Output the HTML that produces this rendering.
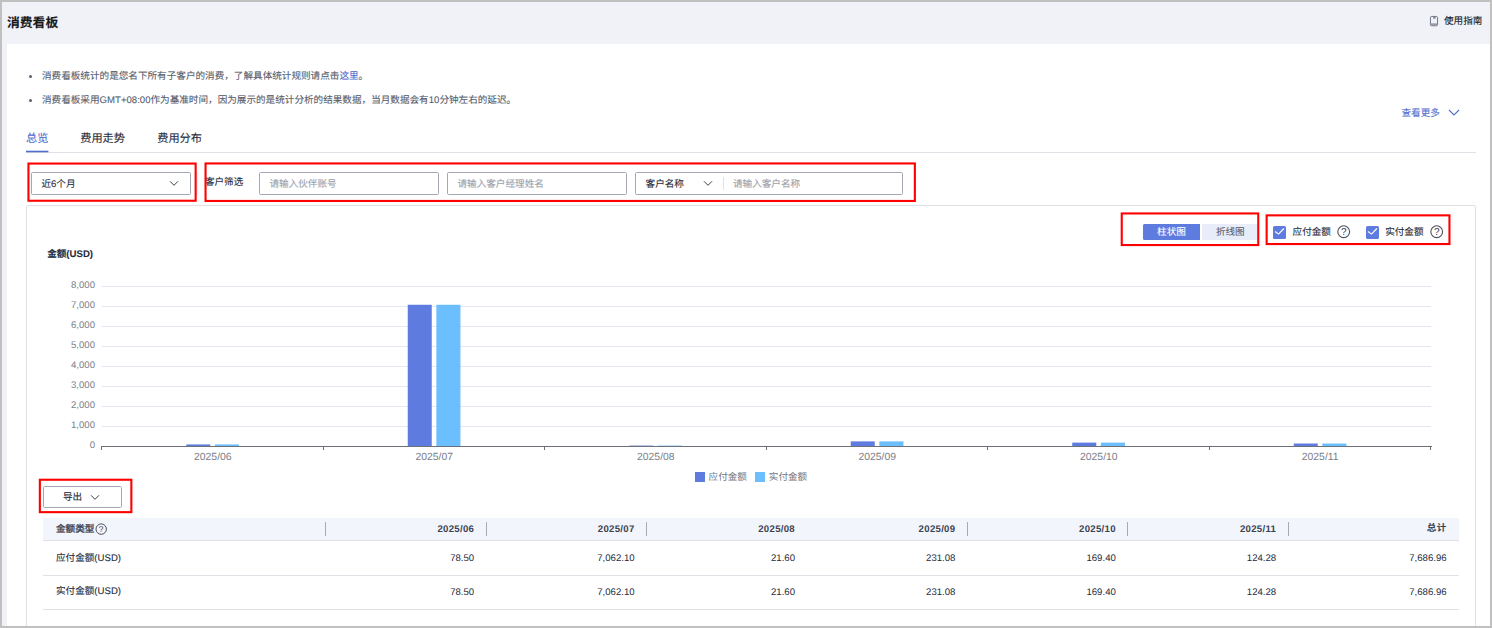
<!DOCTYPE html>
<html lang="zh-CN">
<head>
<meta charset="utf-8">
<title>消费看板</title>
<style>
*{box-sizing:border-box;margin:0;padding:0}
html,body{width:1492px;height:628px;overflow:hidden;background:#f0f2f7}
body{position:relative;font-family:"Liberation Sans","Noto Sans CJK SC",sans-serif;font-size:9.6px;color:#252b3a;line-height:1;text-rendering:geometricPrecision;-webkit-font-smoothing:antialiased}
.abs{position:absolute}
.t{position:absolute;white-space:nowrap;line-height:12px;height:12px;-webkit-text-stroke:.1px}
#frame{position:absolute;left:0;top:0;width:1492px;height:628px;border:2px solid #c0c0c0;z-index:50;pointer-events:none}
#card{position:absolute;left:7px;top:44px;width:1483px;height:582px;background:#fff}
.red{position:absolute;border:2px solid #ff0000}
.inp{position:absolute;height:22.6px;top:172.1px;border:1px solid #a4a8b4;border-radius:1.6px;background:#fff}
.ph{color:#9da1ab}
.blue{color:#526ecc}
.grid{position:absolute;left:102px;width:1329px;height:1px;background:#e3e6f3}
.yl{position:absolute;width:60px;left:35px;text-align:right;color:#7a7e88;line-height:12px;height:12px;font-size:9.6px}
.xl{position:absolute;width:80px;text-align:center;color:#7a7e88;line-height:12px;height:12px;font-size:10.4px;top:452.2px}
.b1{position:absolute;background:#5e7ce0}
.b2{position:absolute;background:#6cbfff}
.tick{position:absolute;width:1px;height:4px;top:446px;background:#6e7079}
.th{position:absolute;top:519px;height:22.4px;line-height:22px;font-weight:bold;color:#3d4351;text-align:right;padding-right:12px;font-size:9.6px;letter-spacing:.3px}
.td{position:absolute;height:34px;line-height:34px;text-align:right;padding-right:12px;color:#252b3a}
.sep{position:absolute;top:522px;height:13.5px;width:1px;background:#a6aab3}
.hl{position:absolute;left:43px;width:1416px;height:1px;background:#dfe1e6}
</style>
</head>
<body>
<div id="frame"></div>
<!-- header -->
<div class="t" style="left:7px;top:14.8px;font-size:12.8px;font-weight:bold;line-height:16px;height:16px;color:#191919">消费看板</div>
<svg class="abs" style="left:1429px;top:15px" width="10" height="12" viewBox="0 0 10 12"><rect x="1.45" y="1.45" width="7.1" height="9.3" rx="1.3" fill="none" stroke="#6b7080" stroke-width=".95"/><path d="M1.6 8.6H8.4" stroke="#9a9eaa" stroke-width=".8" fill="none"/><path d="M1.6 9.7H8.4" stroke="#7a7f8c" stroke-width=".9" fill="none"/><path d="M4.3 1.5V4L5.4 3.4L6.5 4V1.5Z" fill="#7a7f8c"/></svg>
<div class="t" style="left:1444px;top:15.8px;color:#191919">使用指南</div>

<div id="card"></div>

<!-- notes -->
<div class="abs" style="left:28.6px;top:74.6px;width:3px;height:3px;border-radius:50%;background:#575d6c"></div>
<div class="t" style="left:42px;top:70.8px;color:#575d6c">消费看板统计的是您名下所有子客户的消费，了解具体统计规则请点击<span class="blue">这里</span>。</div>
<div class="abs" style="left:28.6px;top:98.6px;width:3px;height:3px;border-radius:50%;background:#575d6c"></div>
<div class="t" style="left:42px;top:94.8px;color:#575d6c">消费看板采用GMT+08:00作为基准时间，因为展示的是统计分析的结果数据，当月数据会有10分钟左右的延迟。</div>
<div class="t blue" style="left:1401.5px;top:108.1px">查看更多</div>
<svg class="abs" style="left:1447.6px;top:109.3px" width="12" height="8" viewBox="0 0 12 8"><path d="M1 1L6 6L11 1" fill="none" stroke="#526ecc" stroke-width="1.1"/></svg>

<!-- tabs -->
<div class="abs" style="left:26px;top:152px;width:1450px;height:1px;background:#dfe1e6"></div>
<svg class="abs" style="left:26px;top:149px" width="24" height="5"><rect x="0" y="1.7" width="22.4" height="1.6" fill="#526ecc"/></svg>
<div class="t blue" style="left:26px;top:131.8px;font-size:11.2px;line-height:14px;height:14px">总览</div>
<div class="t" style="left:80.2px;top:131.8px;font-size:11.2px;line-height:14px;height:14px">费用走势</div>
<div class="t" style="left:157.2px;top:131.8px;font-size:11.2px;line-height:14px;height:14px">费用分布</div>

<!-- filters -->
<div class="inp" style="left:31px;width:160px"></div>
<div class="t" style="left:41.4px;top:179.4px">近6个月</div>
<svg class="abs" style="left:169px;top:180.4px" width="10" height="7" viewBox="0 0 10 7"><path d="M1 1.3L5 5.3L9 1.3" fill="none" stroke="#3a3f4c" stroke-width="1"/></svg>
<svg class="abs" style="left:25px;top:160px" width="175" height="45"><rect x="3.45" y="3.55" width="167.20" height="37.20" fill="none" stroke="#ff0000" stroke-width="2.1"/></svg>
<div class="abs" style="left:197px;top:172px;width:1px;height:22.6px;background:#e9ecf3"></div>
<div class="t" style="left:204.9px;top:176.6px">客户筛选</div>
<div class="inp" style="left:259px;width:180px"></div>
<div class="t ph" style="left:269.5px;top:179.4px">请输入伙伴账号</div>
<div class="inp" style="left:447px;width:180px"></div>
<div class="t ph" style="left:457.5px;top:179.4px">请输入客户经理姓名</div>
<div class="inp" style="left:635px;width:268px"></div>
<div class="t" style="left:645.6px;top:179.4px">客户名称</div>
<svg class="abs" style="left:702.6px;top:180.4px" width="10" height="7" viewBox="0 0 10 7"><path d="M1 1.3L5 5.3L9 1.3" fill="none" stroke="#3a3f4c" stroke-width="1"/></svg>
<div class="abs" style="left:723px;top:177.4px;width:1px;height:12.4px;background:#dfe1e6"></div>
<div class="t ph" style="left:733px;top:179.4px">请输入客户名称</div>
<svg class="abs" style="left:202px;top:160px" width="717" height="45"><rect x="3.55" y="3.45" width="709.30" height="37.50" fill="none" stroke="#ff0000" stroke-width="2.1"/></svg>

<!-- chart panel -->
<div class="abs" style="left:26px;top:205px;width:1450px;height:440px;border:1px solid #dfe1e6;border-radius:2px"></div>
<div class="abs" style="left:1143px;top:224px;width:57px;height:15.8px;background:#5e7ce0;border-radius:1.6px 0 0 1.6px"></div>
<div class="t" style="left:1143px;top:226.6px;width:57px;text-align:center;color:#fff">柱状图</div>
<div class="abs" style="left:1201.8px;top:224px;width:56px;height:15.8px;background:#e9edfa;border-radius:0 1.6px 1.6px 0"></div>
<div class="t" style="left:1201.8px;top:226.6px;width:57px;text-align:center;color:#575d6c">折线图</div>
<svg class="abs" style="left:1118px;top:210px" width="144" height="39"><rect x="3.75" y="3.45" width="136.50" height="31.60" fill="none" stroke="#ff0000" stroke-width="2.1"/></svg>
<svg class="abs" style="left:1273px;top:226px" width="13" height="13" viewBox="0 0 13 13"><rect width="13" height="13" rx="1.6" fill="#5e7ce0"/><path d="M2 5.5L5.5 8.1L10.9 2.5" fill="none" stroke="#fff" stroke-width="1.15"/></svg>
<div class="t" style="left:1292.6px;top:227.2px">应付金额</div>
<svg class="abs" style="left:1336.8px;top:224.8px" width="14" height="14" viewBox="0 0 14 14"><circle cx="6.7" cy="6.7" r="5.9" fill="none" stroke="#4a4f5c" stroke-width="1.1"/><text x="6.7" y="10.2" font-size="10" text-anchor="middle" fill="#3d4351" font-family="Liberation Sans,sans-serif">?</text></svg>
<svg class="abs" style="left:1366.2px;top:226px" width="13" height="13" viewBox="0 0 13 13"><rect width="13" height="13" rx="1.6" fill="#5e7ce0"/><path d="M2 5.5L5.5 8.1L10.9 2.5" fill="none" stroke="#fff" stroke-width="1.15"/></svg>
<div class="t" style="left:1385.2px;top:227.2px">实付金额</div>
<svg class="abs" style="left:1429.8px;top:224.8px" width="14" height="14" viewBox="0 0 14 14"><circle cx="6.7" cy="6.7" r="5.9" fill="none" stroke="#4a4f5c" stroke-width="1.1"/><text x="6.7" y="10.2" font-size="10" text-anchor="middle" fill="#3d4351" font-family="Liberation Sans,sans-serif">?</text></svg>
<svg class="abs" style="left:1263px;top:212px" width="191" height="37"><rect x="3.65" y="3.35" width="182.80" height="28.70" fill="none" stroke="#ff0000" stroke-width="2.1"/></svg>
<div class="t" style="left:47.2px;top:249.0px;font-weight:bold">金额(USD)</div>
<!-- chart -->
<div class="grid" style="top:285.8px"></div>
<div class="yl" style="top:280.2px">8,000</div>
<div class="grid" style="top:305.8px"></div>
<div class="yl" style="top:300.2px">7,000</div>
<div class="grid" style="top:325.8px"></div>
<div class="yl" style="top:320.2px">6,000</div>
<div class="grid" style="top:345.8px"></div>
<div class="yl" style="top:340.2px">5,000</div>
<div class="grid" style="top:365.8px"></div>
<div class="yl" style="top:360.2px">4,000</div>
<div class="grid" style="top:385.8px"></div>
<div class="yl" style="top:380.2px">3,000</div>
<div class="grid" style="top:405.8px"></div>
<div class="yl" style="top:400.2px">2,000</div>
<div class="grid" style="top:425.8px"></div>
<div class="yl" style="top:420.2px">1,000</div>
<div class="yl" style="top:440.2px">0</div>
<svg class="abs" style="left:0;top:0" width="1492" height="470" viewBox="0 0 1492 470"><rect x="186.25" y="444.43" width="24" height="1.57" fill="#5e7ce0"/><rect x="214.85" y="444.43" width="24.1" height="1.57" fill="#6cbfff"/><rect x="407.75" y="304.76" width="24" height="141.24" fill="#5e7ce0"/><rect x="436.35" y="304.76" width="24.1" height="141.24" fill="#6cbfff"/><rect x="629.25" y="445.57" width="24" height="0.43" fill="#5e7ce0"/><rect x="657.85" y="445.57" width="24.1" height="0.43" fill="#6cbfff"/><rect x="850.75" y="441.38" width="24" height="4.62" fill="#5e7ce0"/><rect x="879.35" y="441.38" width="24.1" height="4.62" fill="#6cbfff"/><rect x="1072.25" y="442.61" width="24" height="3.39" fill="#5e7ce0"/><rect x="1100.85" y="442.61" width="24.1" height="3.39" fill="#6cbfff"/><rect x="1293.75" y="443.51" width="24" height="2.49" fill="#5e7ce0"/><rect x="1322.35" y="443.51" width="24.1" height="2.49" fill="#6cbfff"/></svg>
<div class="abs" style="left:101px;top:445.8px;width:1331px;height:1px;background:#6e7079"></div>
<div class="tick" style="left:101.0px"></div>
<div class="tick" style="left:322.5px"></div>
<div class="tick" style="left:544.0px"></div>
<div class="tick" style="left:765.5px"></div>
<div class="tick" style="left:987.0px"></div>
<div class="tick" style="left:1208.5px"></div>
<div class="tick" style="left:1430.0px"></div>
<div class="xl" style="left:172.8px">2025/06</div>
<div class="xl" style="left:394.2px">2025/07</div>
<div class="xl" style="left:615.8px">2025/08</div>
<div class="xl" style="left:837.2px">2025/09</div>
<div class="xl" style="left:1058.8px">2025/10</div>
<div class="xl" style="left:1280.2px">2025/11</div>
<div class="abs" style="left:695px;top:472.3px;width:9.6px;height:9.6px;background:#5e7ce0"></div>
<div class="t" style="left:708.6px;top:472.2px;color:#71757f;-webkit-text-stroke:0">应付金额</div>
<div class="abs" style="left:755.2px;top:472.3px;width:9.6px;height:9.6px;background:#6cbfff"></div>
<div class="t" style="left:768.8px;top:472.2px;color:#71757f;-webkit-text-stroke:0">实付金额</div>
<!-- export -->
<div class="abs" style="left:43.2px;top:486.4px;width:78.4px;height:21.2px;border:1px solid #a4a8b4;border-radius:1.6px;background:#fff"></div>
<div class="t" style="left:63px;top:492.4px">导出</div>
<svg class="abs" style="left:90.4px;top:494.4px" width="10" height="7" viewBox="0 0 10 7"><path d="M1 1.3L5 5.3L9 1.3" fill="none" stroke="#3a3f4c" stroke-width="1"/></svg>
<svg class="abs" style="left:36px;top:476px" width="99" height="40"><rect x="3.85" y="3.75" width="91.50" height="32.40" fill="none" stroke="#ff0000" stroke-width="2.1"/></svg>
<!-- table -->
<div class="abs" style="left:43px;top:518px;width:1416px;height:22.4px;background:#f2f5fc"></div>
<div class="hl" style="top:540px"></div>
<div class="hl" style="top:574.8px"></div>
<div class="hl" style="top:608.8px"></div>
<div class="t" style="left:56px;top:523.6px;font-weight:500;-webkit-text-stroke:.25px;color:#3d4351">金额类型</div>
<svg class="abs" style="left:94.6px;top:522.5px" width="13" height="13" viewBox="0 0 13 13"><circle cx="6.2" cy="6.1" r="5.2" fill="none" stroke="#4a4f5c" stroke-width="1"/><text x="6.2" y="9.1" font-size="8.4" text-anchor="middle" fill="#3d4351" font-family="Liberation Sans,sans-serif">?</text></svg>
<div class="t" style="left:56px;top:552.6px">应付金额(USD)</div>
<div class="t" style="left:56px;top:586.4px">实付金额(USD)</div>
<div class="sep" style="left:325.0px"></div>
<div class="sep" style="left:486.2px"></div>
<div class="sep" style="left:646.4px"></div>
<div class="sep" style="left:967.0px"></div>
<div class="sep" style="left:1127.4px"></div>
<div class="sep" style="left:1287.8px"></div>
<div class="th" style="left:326.2px;width:160px">2025/06</div>
<div class="td" style="left:326.2px;width:160px;top:541.8px">78.50</div>
<div class="td" style="left:326.2px;width:160px;top:575.6px">78.50</div>
<div class="th" style="left:486.6px;width:160px">2025/07</div>
<div class="td" style="left:486.6px;width:160px;top:541.8px">7,062.10</div>
<div class="td" style="left:486.6px;width:160px;top:575.6px">7,062.10</div>
<div class="th" style="left:647.0px;width:160px">2025/08</div>
<div class="td" style="left:647.0px;width:160px;top:541.8px">21.60</div>
<div class="td" style="left:647.0px;width:160px;top:575.6px">21.60</div>
<div class="th" style="left:807.4px;width:160px">2025/09</div>
<div class="td" style="left:807.4px;width:160px;top:541.8px">231.08</div>
<div class="td" style="left:807.4px;width:160px;top:575.6px">231.08</div>
<div class="th" style="left:967.8px;width:160px">2025/10</div>
<div class="td" style="left:967.8px;width:160px;top:541.8px">169.40</div>
<div class="td" style="left:967.8px;width:160px;top:575.6px">169.40</div>
<div class="th" style="left:1128.2px;width:160px">2025/11</div>
<div class="td" style="left:1128.2px;width:160px;top:541.8px">124.28</div>
<div class="td" style="left:1128.2px;width:160px;top:575.6px">124.28</div>
<div class="th" style="left:1298.6px;width:160px;top:518px">总计</div>
<div class="td" style="left:1298.6px;width:160px;top:541.8px">7,686.96</div>
<div class="td" style="left:1298.6px;width:160px;top:575.6px">7,686.96</div>
</body>
</html>
